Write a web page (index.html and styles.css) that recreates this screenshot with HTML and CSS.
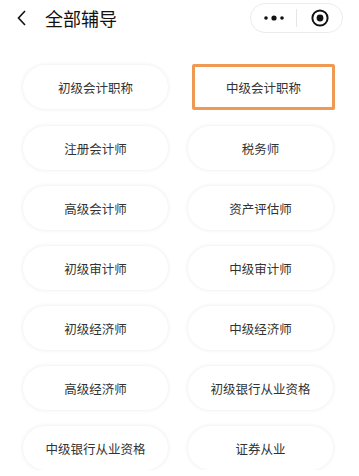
FILE: index.html
```html
<!DOCTYPE html>
<html lang="zh">
<head>
<meta charset="utf-8">
<link rel="stylesheet" href="styles.css">
</head>
<body>
<header class="nav">
  <div class="nav-left">
    <svg class="back" width="12" height="18" viewBox="0 0 12 18"><path d="M9 2 L2.5 9 L9 16" fill="none" stroke="#111" stroke-width="1.6"/></svg>
    <span class="title">全部辅导</span>
  </div>
  <div class="capsule">
    <span class="cap-btn">
      <svg width="24" height="8" viewBox="0 0 24 8"><circle cx="4" cy="4" r="1.8" fill="#111"/><circle cx="12" cy="4" r="2.6" fill="#111"/><circle cx="20" cy="4" r="1.8" fill="#111"/></svg>
    </span>
    <span class="cap-div"></span>
    <span class="cap-btn">
      <svg width="20" height="20" viewBox="0 0 20 20"><circle cx="10" cy="10" r="7.6" fill="none" stroke="#111" stroke-width="2"/><circle cx="10" cy="10" r="3.4" fill="#111"/></svg>
    </span>
  </div>
</header>
<main class="grid">
  <div class="item">初级会计职称</div>
  <div class="item active">中级会计职称</div>
  <div class="item">注册会计师</div>
  <div class="item">税务师</div>
  <div class="item">高级会计师</div>
  <div class="item">资产评估师</div>
  <div class="item">初级审计师</div>
  <div class="item">中级审计师</div>
  <div class="item">初级经济师</div>
  <div class="item">中级经济师</div>
  <div class="item">高级经济师</div>
  <div class="item">初级银行从业资格</div>
  <div class="item">中级银行从业资格</div>
  <div class="item">证券从业</div>
</main>
</body>
</html>
```
FILE: styles.css
```css
html, body {
  margin: 0;
  padding: 0;
  background: #fff;
  font-family: "Noto Sans CJK SC", "Noto Sans", sans-serif;
}
.nav {
  height: 34px;
  display: flex;
  align-items: center;
  justify-content: space-between;
  padding: 0 16px 0 16px;
  box-sizing: border-box;
  margin-top: 1px;
}
.nav-left {
  display: flex;
  align-items: center;
}
.back {
  display: block;
  margin-right: 17px;
}
.title {
  font-size: 18px;
  color: #111;
  line-height: 1;
}
.capsule {
  width: 93px;
  height: 30px;
  box-sizing: border-box;
  border: 1px solid #ececec;
  border-radius: 15px;
  display: flex;
  align-items: center;
}
.cap-btn {
  flex: 1;
  display: flex;
  align-items: center;
  justify-content: center;
}
.cap-btn svg { display: block; }
.cap-div {
  width: 1px;
  height: 18px;
  background: #e6e6e6;
}
.grid {
  display: grid;
  grid-template-columns: 145px 145px;
  column-gap: 20px;
  row-gap: 16px;
  padding: 30px 0 0 23px;
}
.item {
  height: 44px;
  border-radius: 22px;
  background: #fff;
  box-shadow: 0 0 4px rgba(0, 0, 0, 0.09);
  display: flex;
  align-items: center;
  justify-content: center;
  font-size: 12.5px;
  color: #333;
}
.item.active {
  border-radius: 2px;
  border: 3px solid #ee9a55;
  box-shadow: none;
  margin-top: -1px;
  height: 46px;
  box-sizing: border-box;
  margin-left: 4px;
  margin-right: -2px;
}
```
